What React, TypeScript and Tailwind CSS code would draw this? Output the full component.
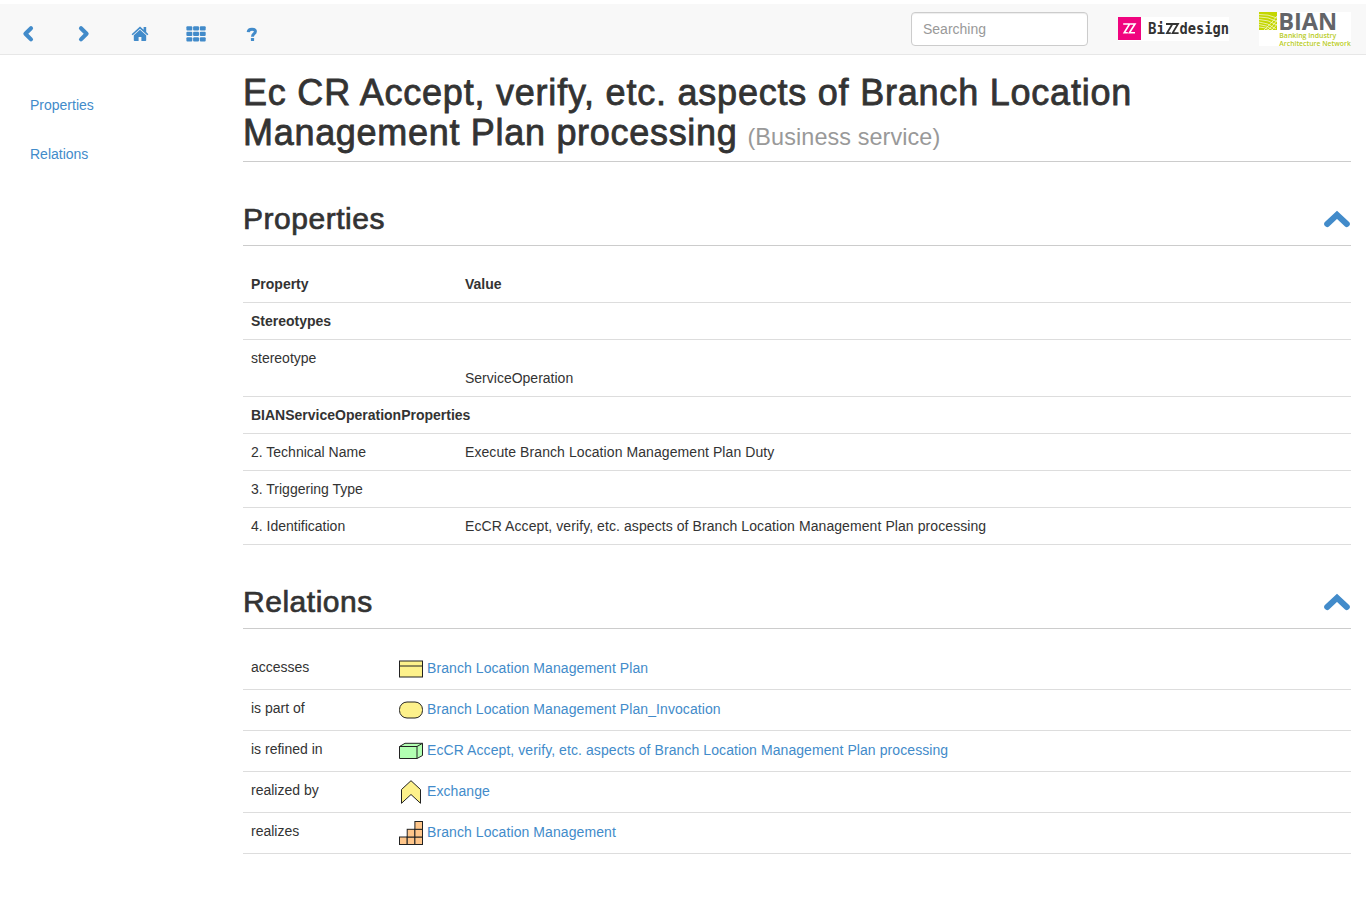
import React from "react";

function Chevron({ className, d }: { className: string; d: string }) {
  return (
    <svg className={className} viewBox="0 0 18 18" fill="none" stroke="#428bca" strokeWidth="4.1" strokeLinecap="round" strokeLinejoin="round">
      <path d={d} />
    </svg>
  );
}

function HomeIcon() {
  return (
    <svg className="h-[18px] w-[18px]" viewBox="0 0 18 18" fill="#428bca">
      <path d="M9 1.6 L0.6 9.2 L1.7 10.3 L9 3.8 L16.3 10.3 L17.4 9.2 L15.2 7.1 V2 H12.6 V4.8 Z" />
      <path d="M9 4.7 L2.8 10.2 V15.2 Q2.8 16 3.6 16 H7.6 V12 H10.4 V16 H14.4 Q15.2 16 15.2 15.2 V10.2 Z" />
    </svg>
  );
}

function GridIcon() {
  return (
    <svg className="h-[16px] w-[20px]" viewBox="0 0 20 16" fill="#428bca">
      {[0.3, 5.8, 11.2].map((y) =>
        [0.4, 7.1, 13.8].map((x) => <rect key={`${x}-${y}`} x={x} y={y} width="5.9" height="4.2" rx="1" />)
      )}
    </svg>
  );
}

function HelpIcon() {
  return (
    <svg className="h-[16px] w-[12px]" viewBox="0 0 12 16" fill="none">
      <path d="M2.2 6.2 Q2.4 3.3 6 3.3 Q9.4 3.3 9.4 5.6 Q9.4 6.9 7.8 7.9 Q6.5 8.8 6.5 10.8" stroke="#428bca" strokeWidth="3" />
      <rect x="4.9" y="11.9" width="3.2" height="3" rx="0.5" fill="#428bca" />
    </svg>
  );
}

function BizzLogo() {
  return (
    <div className="flex h-[24px] w-[111px] items-center bg-white">
      <svg className="h-[24px] w-[111px] overflow-visible" viewBox="0 0 111 24">
        <rect width="23" height="23" fill="#f0047f" />
        <path d="M5.2 7 H17 L11.4 15.8 H17 M11.6 7 L6.2 15.8 H9.8" fill="none" stroke="#fff" strokeWidth="1.6" />
        <g fill="#333" fontFamily="'DejaVu Sans Mono', monospace" fontSize="15" fontWeight="700">
          <text x="30" y="17" textLength="17" lengthAdjust="spacingAndGlyphs">Bi</text>
          <text x="61.5" y="17" textLength="49.5" lengthAdjust="spacingAndGlyphs">design</text>
        </g>
        <path d="M48 7 H60 L54.6 16.1 H60.6 M54.4 7 L49 16.1 H52.8" fill="none" stroke="#333" strokeWidth="1.8" />
      </svg>
    </div>
  );
}

function BianLogo() {
  return (
    <svg className="h-[35px] w-[92px] overflow-visible" viewBox="0 0 92 35">
      <rect width="92" height="34" fill="#fff" />
      <rect width="18" height="18" fill="#c4d600" />
      <g stroke="#f4f8c8" strokeWidth="0.8" fill="none">
        <path d="M0 2.5 Q9 2 18 6" />
        <path d="M0 5 Q9 4.5 18 9.5" />
        <path d="M0 7.5 Q9 7.5 18 13" />
        <path d="M0 10 Q9 10.5 17 17" />
        <path d="M0 12.5 Q8 13 14 18" />
        <path d="M0 15 Q6 15 10 18" />
        <path d="M5 18 Q13 11 18 4" />
        <path d="M9 18 Q15 13 18 8" />
        <path d="M13 18 Q16 15 18 12" />
      </g>
      <g fontFamily="'Open Sans', 'Noto Sans', sans-serif">
        <text x="19.2" y="17.6" fontSize="23.5" fontWeight="700" fill="#636468" textLength="59" lengthAdjust="spacingAndGlyphs">BIAN</text>
        <text x="20.3" y="26" fontSize="7" fontWeight="600" fill="#b9cc1e" textLength="57" lengthAdjust="spacingAndGlyphs">Banking Industry</text>
        <text x="20.3" y="33.6" fontSize="7" fontWeight="600" fill="#b9cc1e" textLength="71.5" lengthAdjust="spacingAndGlyphs">Architecture Network</text>
      </g>
    </svg>
  );
}

function SectionHeading({ title }: { title: string }) {
  return (
    <div className="flex h-[44px] items-start justify-between border-b border-[#ccc]">
      <h2 className="text-[30px] leading-[33px] tracking-[0.52px] [-webkit-text-stroke:0.7px_#333]">{title}</h2>
      <svg className="mt-[8px] h-[18px] w-[28px]" viewBox="0 0 28 18" fill="none" stroke="#428bca" strokeWidth="6" strokeLinecap="round">
        <path d="M4.2 14 L14 4.9 L23.8 14" />
      </svg>
    </div>
  );
}

const outline = { stroke: "#222", strokeWidth: 1 };

const icons: Record<string, React.ReactNode> = {
  object: (
    <g {...outline} fill="#fdf18b">
      <rect x="0.5" y="4" width="23" height="16" />
      <path d="M0.5 9 H23.5" />
    </g>
  ),
  service: <rect x="0.5" y="4" width="23" height="16" rx="7.5" fill="#fdf18b" {...outline} />,
  product: (
    <g {...outline} fill="#b2ffb2" strokeLinejoin="round">
      <path d="M0.5 7.5 L6 4.3 H23.5 V16.5 L18 19.5 H0.5 Z" />
      <path d="M0.5 7.5 H18 V19.5 M18 7.5 L23.5 4.3" fill="none" />
    </g>
  ),
  process: <path d="M2.5 9.5 L12 0.7 L21.5 9.5 V23.3 L12 14.5 L2.5 23.3 Z" fill="#fdf18b" {...outline} />,
  steps: (
    <g {...outline} fill="#ffc68a">
      <rect x="0.5" y="16" width="7.7" height="7.5" />
      <rect x="8.2" y="16" width="7.7" height="7.5" />
      <rect x="15.9" y="16" width="7.6" height="7.5" />
      <rect x="8.2" y="8.3" width="7.7" height="7.7" />
      <rect x="15.9" y="8.3" width="7.6" height="7.7" />
      <rect x="15.9" y="0.5" width="7.6" height="7.8" />
    </g>
  ),
};

const properties = [
  { name: "Property", value: "Value", bold: true },
  { name: "Stereotypes", value: "", bold: true },
  { name: "stereotype", value: "ServiceOperation", tall: true },
  { name: "BIANServiceOperationProperties", value: "", bold: true },
  { name: "2. Technical Name", value: "Execute Branch Location Management Plan Duty" },
  { name: "3. Triggering Type", value: "" },
  { name: "4. Identification", value: "EcCR Accept, verify, etc. aspects of Branch Location Management Plan processing" },
];

const relations = [
  { name: "accesses", icon: "object", target: "Branch Location Management Plan" },
  { name: "is part of", icon: "service", target: "Branch Location Management Plan_Invocation" },
  { name: "is refined in", icon: "product", target: "EcCR Accept, verify, etc. aspects of Branch Location Management Plan processing" },
  { name: "realized by", icon: "process", target: "Exchange" },
  { name: "realizes", icon: "steps", target: "Branch Location Management" },
];

export default function App() {
  return (
    <div className="min-h-[904px] bg-white pt-1 font-['Liberation_Sans',Arial,sans-serif] text-[14px] leading-5 text-[#333]">
      <header className="flex h-[51px] items-start justify-between border-b border-[#e7e7e7] bg-[#f8f8f8]">
        <nav className="flex pt-[20px]">
          <a className="flex h-5 w-14 items-center justify-center"><Chevron className="h-[18px] w-[18px]" d="M12 3.2 L6.4 8.8 L12 14.4" /></a>
          <a className="flex h-5 w-14 items-center justify-center"><Chevron className="h-[18px] w-[18px]" d="M6 3.2 L11.6 8.8 L6 14.4" /></a>
          <a className="flex h-5 w-14 items-center justify-center"><HomeIcon /></a>
          <a className="flex h-5 w-14 items-center justify-center"><GridIcon /></a>
          <a className="flex h-5 w-14 items-center justify-center"><HelpIcon /></a>
        </nav>
        <div className="flex items-start pr-[15px] pt-2">
          <input
            className="h-[34px] w-[177px] rounded border border-[#ccc] bg-white px-[11px] text-[14px] shadow-[inset_0_1px_1px_rgba(0,0,0,0.075)] placeholder:text-[#999]"
            placeholder="Searching"
          />
          <div className="ml-[30px] mt-[5px]"><BizzLogo /></div>
          <div className="ml-[30px]"><BianLogo /></div>
        </div>
      </header>

      <div className="flex">
        <aside className="flex w-[243px] shrink-0 flex-col gap-[29px] pl-[30px] pt-[40px] text-[#428bca]">
          <a>Properties</a>
          <a>Relations</a>
        </aside>
        <main className="w-[1108px] shrink-0 pt-[18px]">
          <h1 className="h-[89px] border-b border-[#ccc] text-[36px] leading-[40px] tracking-[0.78px] [-webkit-text-stroke:0.8px_#333]">
            <span className="block">Ec CR Accept, verify, etc. aspects of Branch Location</span>
            <span className="block">
              <span className="tracking-[0.7px]">Management Plan processing</span>
              <small className="ml-[10px] text-[23.4px] tracking-[0.1px] text-[#999] [-webkit-text-stroke:0]">(Business service)</small>
            </span>
          </h1>

          <section className="pt-[40px]">
            <SectionHeading title="Properties" />
            <div className="mt-5">
              {properties.map((p) => (
                <div key={p.name} className={`flex border-b border-[#ddd] px-2 pt-2 ${p.tall ? "h-[57px]" : "h-[37px]"} ${p.bold ? "font-bold" : ""}`}>
                  <div className="w-[214px] whitespace-nowrap">{p.name}</div>
                  <div className={p.tall ? "pt-5" : p.bold ? "" : "tracking-[0.08px]"}>{p.value}</div>
                </div>
              ))}
            </div>
          </section>

          <section className="pt-[40px]">
            <SectionHeading title="Relations" />
            <div className="mt-5">
              {relations.map((r) => (
                <div key={r.name} className="flex h-[41px] border-b border-[#ddd] px-2 pt-2">
                  <div className="w-[148px]">{r.name}</div>
                  <svg className="mr-1 h-6 w-6" viewBox="0 0 24 24">{icons[r.icon]}</svg>
                  <a className="pt-px tracking-[0.08px] text-[#428bca]">{r.target}</a>
                </div>
              ))}
            </div>
          </section>
        </main>
      </div>
    </div>
  );
}
